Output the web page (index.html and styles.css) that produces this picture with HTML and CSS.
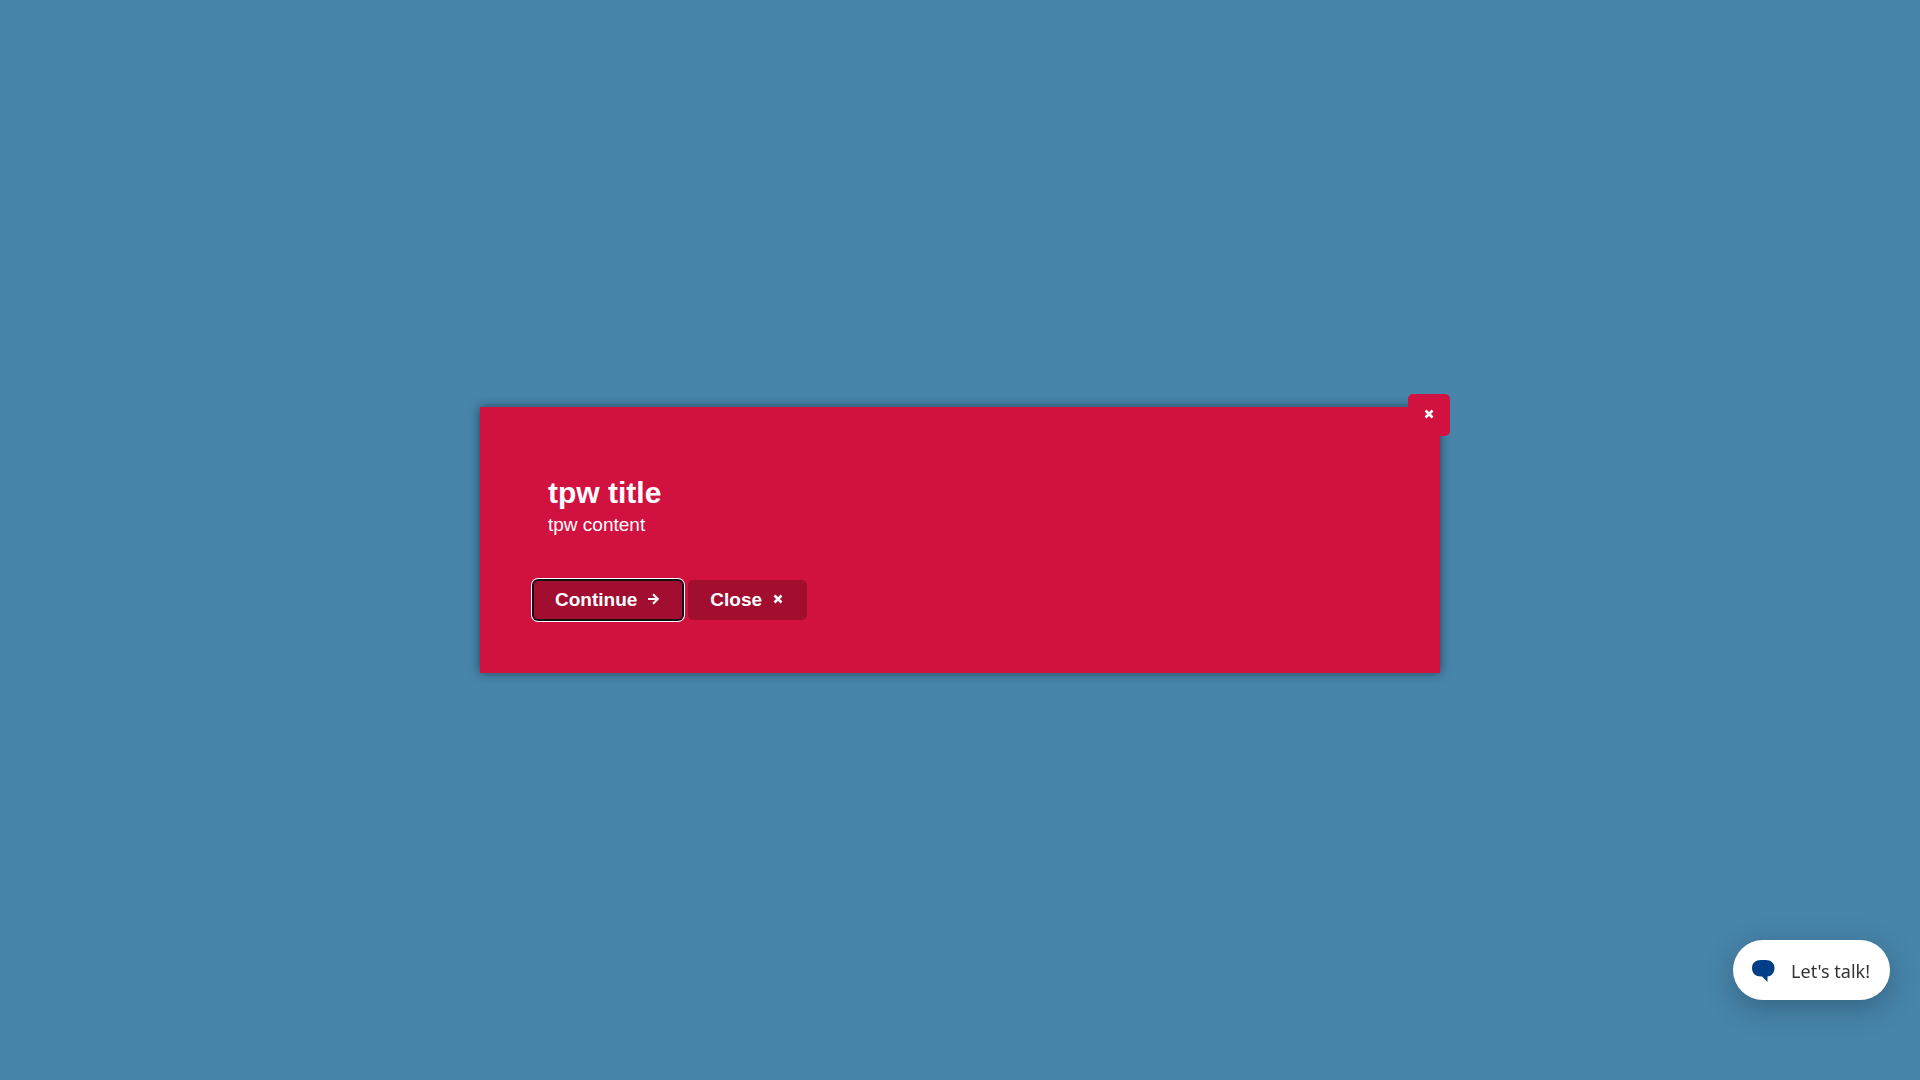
FILE: index.html
```html
<!DOCTYPE html>
<html lang="en">
<head>
  <meta charset="utf-8">
  <meta name="viewport" content="width=device-width, initial-scale=1">
  <title>tpw title</title>
  <link rel="stylesheet" href="styles.css">
</head>
<body>
  <main class="overlay">
    <section class="dialog" role="dialog" aria-modal="true" aria-labelledby="dialog-title">
      <button class="dialog-dismiss" type="button" aria-label="Dismiss">
        <svg class="icon icon-cross" viewBox="0 0 10 10" aria-hidden="true"><path d="M1.500 1.500l7 7M8.500 1.500l-7 7"/></svg>
      </button>
      <div class="dialog-text">
        <h1 class="dialog-title" id="dialog-title">tpw title</h1>
        <p class="dialog-content">tpw content</p>
      </div>
      <div class="dialog-actions">
        <button class="action action-focused" type="button">Continue
          <svg class="icon icon-arrow" viewBox="0 0 12 12" aria-hidden="true"><path d="M1 6h9.500M6 1.200L10.800 6 6 10.800"/></svg>
        </button>
        <button class="action" type="button">Close
          <svg class="icon icon-cross" viewBox="0 0 10 10" aria-hidden="true"><path d="M1.500 1.500l7 7M8.500 1.500l-7 7"/></svg>
        </button>
      </div>
    </section>
  </main>
  <button class="chat" type="button">
    <svg class="chat-icon" viewBox="0 0 24 22" aria-hidden="true"><path d="M10 0h4.500C20 0 23.500 3 23.500 8s-3 8-7 8.500L16.500 22 11 16.500H10C4.500 16.500 1 13 1 8s3.500-8 9-8z"/></svg>
    <span>Let's talk!</span>
  </button>
</body>
</html>
```
FILE: styles.css
```css
* {
  box-sizing: border-box;
}

body {
  margin: 0;
  background: #4785ab;
  color: #fff;
  font-family: "Liberation Sans", Arial, sans-serif;
  font-size: 19px;
}

button {
  border: 0;
  font: inherit;
  cursor: pointer;
}

.overlay {
  display: flex;
  align-items: center;
  justify-content: center;
  min-height: 100vh;
}

.dialog {
  position: relative;
  width: 50%;
  padding: 68px 53px 53px;
  background: #d1113f;
  box-shadow: 0 0 10px rgba(0, 0, 0, 0.5);
}

.dialog-dismiss {
  position: absolute;
  top: -13px;
  right: -10px;
  display: flex;
  align-items: center;
  justify-content: center;
  width: 42px;
  height: 42px;
  padding: 0 0 2px;
  border-radius: 5px;
  background: #d1113f;
  color: #fff;
}

.dialog-text {
  padding: 0 15px;
}

.dialog-title {
  margin: 0;
  font-size: 30px;
  line-height: 36px;
}

.dialog-content {
  margin: 0;
  line-height: 28px;
}

.dialog-actions {
  display: flex;
  gap: 5px;
  margin-top: 41px;
}

.action {
  display: flex;
  align-items: center;
  height: 40px;
  padding: 0 24px 0 22px;
  border-radius: 5px;
  background: #a10e30;
  color: #fff;
  font-weight: bold;
}

.action-focused {
  box-shadow: inset 0 0 0 1px #101010, 0 0 0 1px #101010, 0 0 0 2px #fff;
}

.icon {
  fill: none;
  stroke: currentColor;
  stroke-width: 2;
}

.icon-cross {
  width: 10px;
  height: 10px;
  stroke-width: 2.5;
}

.action .icon {
  margin: 0 0 2px 11px;
}

.action .icon-arrow {
  width: 12px;
  height: 12px;
  margin-left: 10px;
}

.chat {
  position: fixed;
  right: 30px;
  bottom: 80px;
  display: flex;
  align-items: center;
  gap: 16px;
  height: 60px;
  padding: 2px 20px 0 18px;
  border-radius: 30px;
  background: #fff;
  color: #333;
  box-shadow: 0 8px 30px rgba(0, 0, 0, 0.25);
  font-family: "Noto Sans", sans-serif;
  font-size: 18px;
}

.chat-icon {
  width: 24px;
  height: 22px;
  fill: #003f87;
}
```
